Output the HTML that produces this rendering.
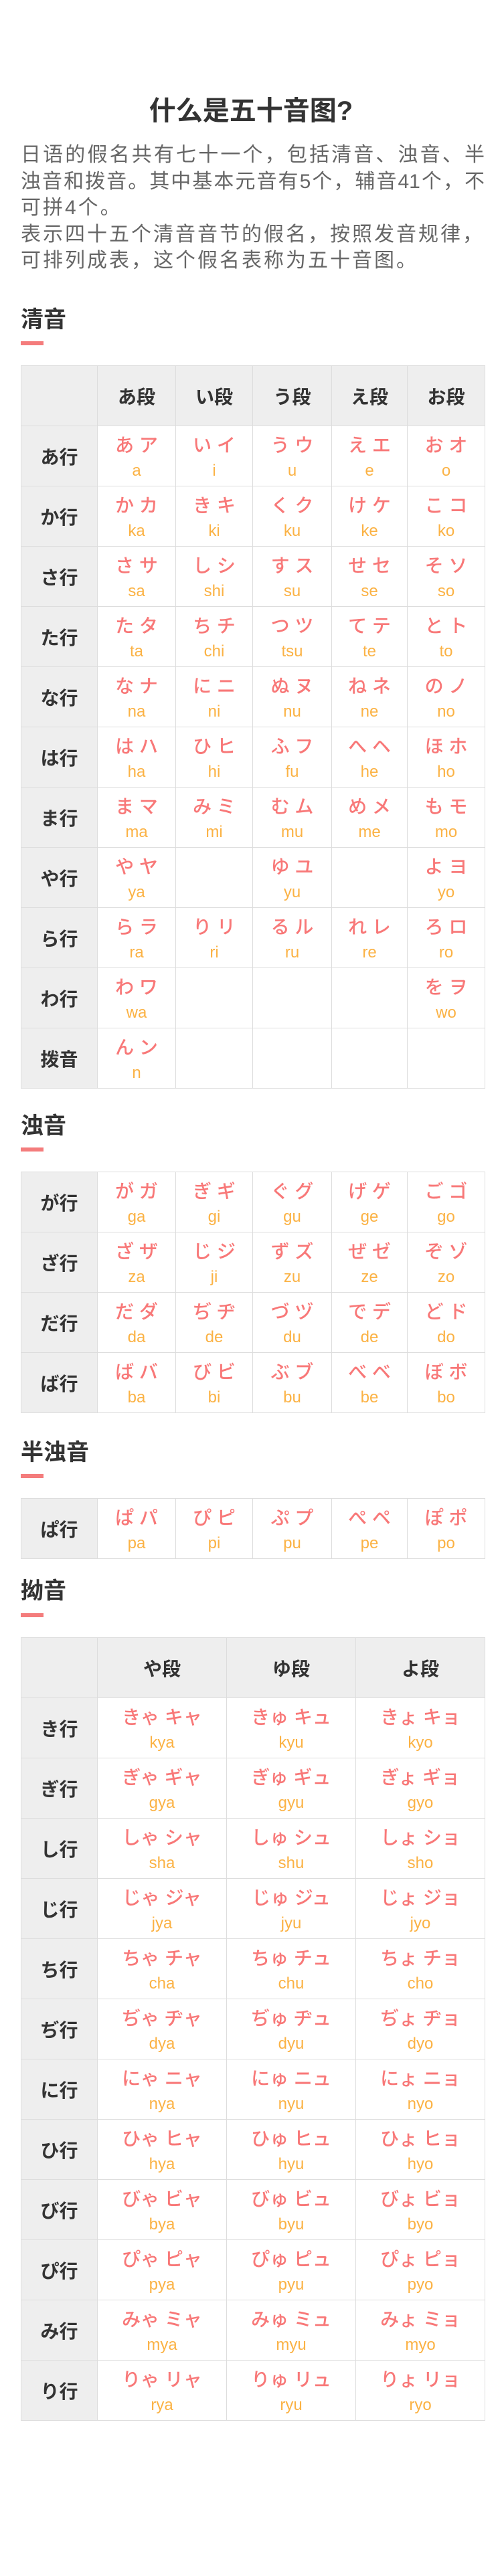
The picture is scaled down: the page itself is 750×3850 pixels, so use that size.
<!DOCTYPE html>
<html><head><meta charset="utf-8">
<style>
*{margin:0;padding:0;box-sizing:border-box}
body{width:750px;height:3850px;background:#fff;position:relative;font-family:"Liberation Sans","Noto Sans CJK JP",sans-serif;overflow:hidden}
.title{position:absolute;left:0;width:750px;top:140px;text-align:center;font-size:40px;font-weight:bold;color:#333;line-height:52px}
.para{position:absolute;left:31px;width:693px;top:212px;font-family:"Liberation Sans","Noto Sans CJK SC",sans-serif;font-size:30px;color:#666;line-height:39.5px;letter-spacing:3px}
.para .j{text-align:justify;text-align-last:justify;letter-spacing:0}
h2{position:absolute;left:31px;font-size:34px;font-weight:bold;color:#333;line-height:44px;font-family:"Liberation Sans","Noto Sans CJK SC",sans-serif}
.bar{position:absolute;left:31px;width:34px;height:6px;background:#f47c7c}
table{position:absolute;left:31px;width:693px;border-collapse:collapse;table-layout:fixed}
td{border:1.5px solid #ddd;height:90px;text-align:center;vertical-align:top;padding-top:13px}
td.l,tr.h td{background:#eeeeee;font-weight:bold;font-size:28px;color:#333;vertical-align:middle;padding-top:0}
.k{font-size:28px;color:#f87878;line-height:32px;font-weight:500;white-space:pre}
.r{font-size:24px;color:#fbb244;line-height:26px;margin-top:9px}
</style></head><body>
<div class="title">什么是五十音图?</div>
<div class="para">
<div class="j">日语的假名共有七十一个，包括清音、浊音、半</div>
<div class="j">浊音和拨音。其中基本元音有5个，辅音41个，不</div>
<div>可拼4个。</div>
<div>表示四十五个清音音节的假名，按照发音规律，</div>
<div>可排列成表，这个假名表称为五十音图。</div>
</div>

<h2 style="top:456px">清音</h2><div class="bar" style="top:510px"></div>
<table style="top:546px">
<colgroup><col style="width:114px"><col style="width:117px"><col style="width:115px"><col style="width:118px"><col style="width:113px"><col style="width:116px"></colgroup>
<tr class="h" style="height:89px"><td style="height:89px"></td><td>あ段</td><td>い段</td><td>う段</td><td>え段</td><td>お段</td></tr>
<tr><td class="l">あ行</td><td><div class="k">あ ア</div><div class="r">a</div></td><td><div class="k">い イ</div><div class="r">i</div></td><td><div class="k">う ウ</div><div class="r">u</div></td><td><div class="k">え エ</div><div class="r">e</div></td><td><div class="k">お オ</div><div class="r">o</div></td></tr>
<tr><td class="l">か行</td><td><div class="k">か カ</div><div class="r">ka</div></td><td><div class="k">き キ</div><div class="r">ki</div></td><td><div class="k">く ク</div><div class="r">ku</div></td><td><div class="k">け ケ</div><div class="r">ke</div></td><td><div class="k">こ コ</div><div class="r">ko</div></td></tr>
<tr><td class="l">さ行</td><td><div class="k">さ サ</div><div class="r">sa</div></td><td><div class="k">し シ</div><div class="r">shi</div></td><td><div class="k">す ス</div><div class="r">su</div></td><td><div class="k">せ セ</div><div class="r">se</div></td><td><div class="k">そ ソ</div><div class="r">so</div></td></tr>
<tr><td class="l">た行</td><td><div class="k">た タ</div><div class="r">ta</div></td><td><div class="k">ち チ</div><div class="r">chi</div></td><td><div class="k">つ ツ</div><div class="r">tsu</div></td><td><div class="k">て テ</div><div class="r">te</div></td><td><div class="k">と ト</div><div class="r">to</div></td></tr>
<tr><td class="l">な行</td><td><div class="k">な ナ</div><div class="r">na</div></td><td><div class="k">に ニ</div><div class="r">ni</div></td><td><div class="k">ぬ ヌ</div><div class="r">nu</div></td><td><div class="k">ね ネ</div><div class="r">ne</div></td><td><div class="k">の ノ</div><div class="r">no</div></td></tr>
<tr><td class="l">は行</td><td><div class="k">は ハ</div><div class="r">ha</div></td><td><div class="k">ひ ヒ</div><div class="r">hi</div></td><td><div class="k">ふ フ</div><div class="r">fu</div></td><td><div class="k">へ ヘ</div><div class="r">he</div></td><td><div class="k">ほ ホ</div><div class="r">ho</div></td></tr>
<tr><td class="l">ま行</td><td><div class="k">ま マ</div><div class="r">ma</div></td><td><div class="k">み ミ</div><div class="r">mi</div></td><td><div class="k">む ム</div><div class="r">mu</div></td><td><div class="k">め メ</div><div class="r">me</div></td><td><div class="k">も モ</div><div class="r">mo</div></td></tr>
<tr><td class="l">や行</td><td><div class="k">や ヤ</div><div class="r">ya</div></td><td></td><td><div class="k">ゆ ユ</div><div class="r">yu</div></td><td></td><td><div class="k">よ ヨ</div><div class="r">yo</div></td></tr>
<tr><td class="l">ら行</td><td><div class="k">ら ラ</div><div class="r">ra</div></td><td><div class="k">り リ</div><div class="r">ri</div></td><td><div class="k">る ル</div><div class="r">ru</div></td><td><div class="k">れ レ</div><div class="r">re</div></td><td><div class="k">ろ ロ</div><div class="r">ro</div></td></tr>
<tr><td class="l">わ行</td><td><div class="k">わ ワ</div><div class="r">wa</div></td><td></td><td></td><td></td><td><div class="k">を ヲ</div><div class="r">wo</div></td></tr>
<tr><td class="l">拨音</td><td><div class="k">ん ン</div><div class="r">n</div></td><td></td><td></td><td></td><td></td></tr>
</table>

<h2 style="top:1661px">浊音</h2><div class="bar" style="top:1715px"></div>
<table style="top:1751px">
<colgroup><col style="width:114px"><col style="width:117px"><col style="width:115px"><col style="width:118px"><col style="width:113px"><col style="width:116px"></colgroup>
<tr><td class="l">が行</td><td><div class="k">が ガ</div><div class="r">ga</div></td><td><div class="k">ぎ ギ</div><div class="r">gi</div></td><td><div class="k">ぐ グ</div><div class="r">gu</div></td><td><div class="k">げ ゲ</div><div class="r">ge</div></td><td><div class="k">ご ゴ</div><div class="r">go</div></td></tr>
<tr><td class="l">ざ行</td><td><div class="k">ざ ザ</div><div class="r">za</div></td><td><div class="k">じ ジ</div><div class="r">ji</div></td><td><div class="k">ず ズ</div><div class="r">zu</div></td><td><div class="k">ぜ ゼ</div><div class="r">ze</div></td><td><div class="k">ぞ ゾ</div><div class="r">zo</div></td></tr>
<tr><td class="l">だ行</td><td><div class="k">だ ダ</div><div class="r">da</div></td><td><div class="k">ぢ ヂ</div><div class="r">de</div></td><td><div class="k">づ ヅ</div><div class="r">du</div></td><td><div class="k">で デ</div><div class="r">de</div></td><td><div class="k">ど ド</div><div class="r">do</div></td></tr>
<tr><td class="l">ば行</td><td><div class="k">ば バ</div><div class="r">ba</div></td><td><div class="k">び ビ</div><div class="r">bi</div></td><td><div class="k">ぶ ブ</div><div class="r">bu</div></td><td><div class="k">べ ベ</div><div class="r">be</div></td><td><div class="k">ぼ ボ</div><div class="r">bo</div></td></tr>
</table>

<h2 style="top:2149px">半浊音</h2><div class="bar" style="top:2203px"></div>
<table style="top:2239px">
<colgroup><col style="width:114px"><col style="width:117px"><col style="width:115px"><col style="width:118px"><col style="width:113px"><col style="width:116px"></colgroup>
<tr><td class="l">ぱ行</td><td><div class="k">ぱ パ</div><div class="r">pa</div></td><td><div class="k">ぴ ピ</div><div class="r">pi</div></td><td><div class="k">ぷ プ</div><div class="r">pu</div></td><td><div class="k">ぺ ペ</div><div class="r">pe</div></td><td><div class="k">ぽ ポ</div><div class="r">po</div></td></tr>
</table>

<h2 style="top:2356px">拗音</h2><div class="bar" style="top:2411px"></div>
<table style="top:2447px">
<colgroup><col style="width:114px"><col style="width:193px"><col style="width:193px"><col style="width:193px"></colgroup>
<tr class="h"><td></td><td>や段</td><td>ゆ段</td><td>よ段</td></tr>
<tr><td class="l">き行</td><td><div class="k">きゃ キャ</div><div class="r">kya</div></td><td><div class="k">きゅ キュ</div><div class="r">kyu</div></td><td><div class="k">きょ キョ</div><div class="r">kyo</div></td></tr>
<tr><td class="l">ぎ行</td><td><div class="k">ぎゃ ギャ</div><div class="r">gya</div></td><td><div class="k">ぎゅ ギュ</div><div class="r">gyu</div></td><td><div class="k">ぎょ ギョ</div><div class="r">gyo</div></td></tr>
<tr><td class="l">し行</td><td><div class="k">しゃ シャ</div><div class="r">sha</div></td><td><div class="k">しゅ シュ</div><div class="r">shu</div></td><td><div class="k">しょ ショ</div><div class="r">sho</div></td></tr>
<tr><td class="l">じ行</td><td><div class="k">じゃ ジャ</div><div class="r">jya</div></td><td><div class="k">じゅ ジュ</div><div class="r">jyu</div></td><td><div class="k">じょ ジョ</div><div class="r">jyo</div></td></tr>
<tr><td class="l">ち行</td><td><div class="k">ちゃ チャ</div><div class="r">cha</div></td><td><div class="k">ちゅ チュ</div><div class="r">chu</div></td><td><div class="k">ちょ チョ</div><div class="r">cho</div></td></tr>
<tr><td class="l">ぢ行</td><td><div class="k">ぢゃ ヂャ</div><div class="r">dya</div></td><td><div class="k">ぢゅ ヂュ</div><div class="r">dyu</div></td><td><div class="k">ぢょ ヂョ</div><div class="r">dyo</div></td></tr>
<tr><td class="l">に行</td><td><div class="k">にゃ ニャ</div><div class="r">nya</div></td><td><div class="k">にゅ ニュ</div><div class="r">nyu</div></td><td><div class="k">にょ ニョ</div><div class="r">nyo</div></td></tr>
<tr><td class="l">ひ行</td><td><div class="k">ひゃ ヒャ</div><div class="r">hya</div></td><td><div class="k">ひゅ ヒュ</div><div class="r">hyu</div></td><td><div class="k">ひょ ヒョ</div><div class="r">hyo</div></td></tr>
<tr><td class="l">び行</td><td><div class="k">びゃ ビャ</div><div class="r">bya</div></td><td><div class="k">びゅ ビュ</div><div class="r">byu</div></td><td><div class="k">びょ ビョ</div><div class="r">byo</div></td></tr>
<tr><td class="l">ぴ行</td><td><div class="k">ぴゃ ピャ</div><div class="r">pya</div></td><td><div class="k">ぴゅ ピュ</div><div class="r">pyu</div></td><td><div class="k">ぴょ ピョ</div><div class="r">pyo</div></td></tr>
<tr><td class="l">み行</td><td><div class="k">みゃ ミャ</div><div class="r">mya</div></td><td><div class="k">みゅ ミュ</div><div class="r">myu</div></td><td><div class="k">みょ ミョ</div><div class="r">myo</div></td></tr>
<tr><td class="l">り行</td><td><div class="k">りゃ リャ</div><div class="r">rya</div></td><td><div class="k">りゅ リュ</div><div class="r">ryu</div></td><td><div class="k">りょ リョ</div><div class="r">ryo</div></td></tr>
</table>
</body></html>
